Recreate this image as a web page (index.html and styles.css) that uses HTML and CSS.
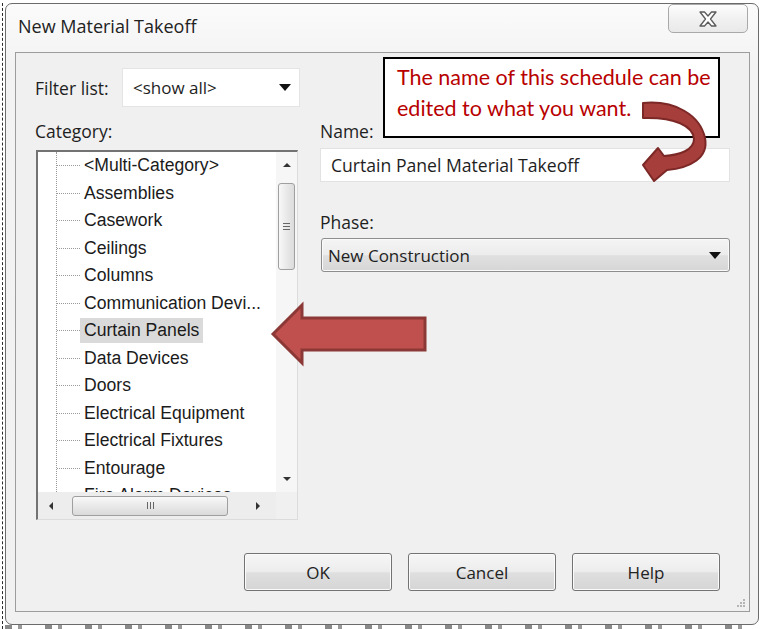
FILE: index.html
```html
<!DOCTYPE html>
<html lang="en">
<head>
    <meta charset="UTF-8">
    <title>New Material Takeoff</title>
    <link rel="stylesheet" href="styles.css">
</head>
<body>
    <div class="screen">
        <div class="desk">
            <div class="window">
                <div class="titlebar">
                    <div class="title">New Material Takeoff</div>
                    <button class="close-btn" aria-label="Close">
                        <svg width="20" height="16" viewBox="0 0 20 16">
                            <polygon points="2,1 6.5,1 10,5 13.5,1 18,1 12.5,8 18,15 13.5,15 10,11 6.5,15 2,15 7.5,8" fill="#fff" stroke="#5b5b5b" stroke-width="1.3" stroke-linejoin="round"/>
                        </svg>
                    </button>
                </div>

                <div class="client">
                    <div class="main">
                        <div class="left-col">
                            <div class="filter-row">
                                <span class="label filter-label">Filter list:</span>
                                <div class="combo filter-combo">
                                    <span>&lt;show all&gt;</span>
                                    <span class="caret"></span>
                                </div>
                            </div>

                            <div class="label category-label">Category:</div>

                            <div class="listbox">
                                <div class="list-view">
                                    <ul class="tree">
                                        <li><span>&lt;Multi-Category&gt;</span></li>
                                        <li><span>Assemblies</span></li>
                                        <li><span>Casework</span></li>
                                        <li><span>Ceilings</span></li>
                                        <li><span>Columns</span></li>
                                        <li><span>Communication Devi...</span></li>
                                        <li class="selected"><span>Curtain Panels</span></li>
                                        <li><span>Data Devices</span></li>
                                        <li><span>Doors</span></li>
                                        <li><span>Electrical Equipment</span></li>
                                        <li><span>Electrical Fixtures</span></li>
                                        <li><span>Entourage</span></li>
                                        <li><span>Fire Alarm Devices</span></li>
                                    </ul>
                                </div>
                                <div class="vscroll">
                                    <div class="sb-btn"><span class="tri tri-up"></span></div>
                                    <div class="thumb-v"><span class="grip-v"></span></div>
                                    <div class="sb-space"></div>
                                    <div class="sb-btn"><span class="tri tri-down"></span></div>
                                </div>
                                <div class="hscroll">
                                    <div class="sb-btn-h"><span class="tri tri-left"></span></div>
                                    <div class="thumb-h"><span class="grip-h"></span></div>
                                    <div class="sb-space"></div>
                                    <div class="sb-btn-h right"><span class="tri tri-right"></span></div>
                                </div>
                                <div class="sb-corner"></div>
                            </div>
                        </div>

                        <div class="right-col">
                            <div class="label">Name:</div>
                            <div class="textbox">Curtain Panel Material Takeoff</div>
                            <div class="label phase-label">Phase:</div>
                            <div class="combo phase-combo">
                                <span>New Construction</span>
                                <span class="caret"></span>
                            </div>
                        </div>
                    </div>

                    <div class="buttons">
                        <button class="btn">OK</button>
                        <button class="btn">Cancel</button>
                        <button class="btn">Help</button>
                    </div>

                    <svg class="size-grip" width="10" height="10" viewBox="0 0 10 10">
                        <rect x="7" y="1" width="2" height="2" fill="#b5b5b5"/>
                        <rect x="4" y="4" width="2" height="2" fill="#b5b5b5"/>
                        <rect x="7" y="4" width="2" height="2" fill="#b5b5b5"/>
                        <rect x="1" y="7" width="2" height="2" fill="#b5b5b5"/>
                        <rect x="4" y="7" width="2" height="2" fill="#b5b5b5"/>
                        <rect x="7" y="7" width="2" height="2" fill="#b5b5b5"/>
                    </svg>
                </div>
            </div>
            <div class="under-strip"></div>
        </div>

        <!-- Annotation layer -->
        <div class="callout">The name of this schedule can be<br>edited to what you want.</div>

        <svg class="arrows" width="761" height="629" viewBox="0 0 761 629">
            <polygon points="273,334 302,305 302,318 425,318 425,350 302,350 302,363" fill="#c0504d" stroke="#8c3836" stroke-width="3"/>
            <path d="M643,103 C675,100 700,115 705,138 C709,158 690,168 667,170 L654,181 L643,165 L658,148 L664,156 C680,155 694,150 694,139 C693,126 675,117 643,118 Z" fill="#a63e3b" stroke="#7c2826" stroke-width="2" stroke-linejoin="round"/>
        </svg>
    </div>
</body>
</html>
```

FILE: styles.css
```css
* {
    margin: 0;
    padding: 0;
    box-sizing: border-box;
}

body {
    background: #fff;
    font-family: 'Open Sans', 'Liberation Sans', sans-serif;
    color: #1e1e1e;
}

.screen {
    width: 761px;
    height: 629px;
    position: relative;
    overflow: hidden;
    padding: 3px 0 0 2px;
    background: #fff;
}

.desk {
    border-left: 1px dashed #2a2a2a;
    padding-left: 2px;
    height: 626px;
}

/* Window frame */
.window {
    width: 754px;
    height: 622px;
    border: 1px solid #6b6b6b;
    border-radius: 7px;
    background: linear-gradient(#fbfbfb, #f3f3f3 60px, #f1f1f1);
    display: flex;
    flex-direction: column;
}

.titlebar {
    height: 48px;
    display: flex;
    justify-content: space-between;
    align-items: flex-start;
}

.title {
    padding-left: 12px;
    line-height: 44px;
    font-size: 18px;
    color: #222;
}

.close-btn {
    width: 80px;
    height: 29px;
    margin-right: 10px;
    border: 1px solid #a9a9a9;
    border-radius: 5px;
    background: linear-gradient(#fdfdfd, #f1f1f1 50%, #e9e9e9);
    display: flex;
    align-items: center;
    justify-content: center;
}

.client {
    position: relative;
    height: 560px;
    margin-left: 9px;
    margin-right: 8px;
    border: 1px solid #9c9c9c;
    background: #f0f0f0;
    padding: 15px 0 0 19px;
}

.main {
    display: flex;
}

.label {
    font-size: 17.5px;
    line-height: 20px;
    color: #1e1e1e;
}

.left-col {
    width: 265px;
}

.filter-row {
    display: flex;
    align-items: center;
    height: 39px;
}

.filter-label {
    width: 87px;
}

.combo {
    display: flex;
    align-items: center;
    justify-content: space-between;
    font-size: 17px;
}

.filter-combo {
    width: 178px;
    height: 39px;
    background: #fff;
    border: 1px solid #e4e4e4;
    padding: 0 8px 0 10px;
}

.caret {
    width: 0;
    height: 0;
    border-left: 6px solid transparent;
    border-right: 6px solid transparent;
    border-top: 7px solid #111;
}

.category-label {
    margin-top: 14px;
    margin-bottom: 9px;
}

/* Category tree list */
.listbox {
    margin-left: 1px;
    width: 262px;
    height: 370px;
    border-top: 2px solid #737373;
    border-left: 2px solid #737373;
    border-right: 1px solid #dcdcdc;
    border-bottom: 1px solid #dcdcdc;
    display: grid;
    grid-template-columns: 238px 21px;
    grid-template-rows: 340px 27px;
    background: #fff;
}

.list-view {
    overflow: hidden;
    background: #fff;
}

.tree {
    list-style: none;
    margin-left: 18px;
    border-left: 1px dotted #9a9a9a;
    font-family: 'Liberation Sans', Arial, sans-serif;
    font-size: 17.6px;
    color: #1b1b1b;
}

.tree li {
    height: 27.5px;
    display: flex;
    align-items: center;
    white-space: nowrap;
}

.tree li::before {
    content: '';
    width: 23px;
    flex: none;
    border-top: 1px dotted #9a9a9a;
}

.tree li span {
    padding: 2px 4px;
}

.tree li.selected span {
    background: #dadada;
}

.vscroll {
    background: #f6f6f6;
    display: flex;
    flex-direction: column;
    align-items: center;
}

.sb-btn {
    height: 26px;
    width: 100%;
    display: flex;
    align-items: center;
    justify-content: center;
}

.sb-space {
    flex: 1;
}

.thumb-v {
    margin-top: 5px;
    width: 17px;
    height: 87px;
    border: 1px solid #9f9f9f;
    border-radius: 3px;
    background: linear-gradient(to right, #f8f8f8, #e9e9e9 50%, #dcdcdc);
    display: flex;
    align-items: center;
    justify-content: center;
}

.grip-v {
    width: 7px;
    height: 7px;
    border-top: 1px solid #666;
    border-bottom: 1px solid #666;
    background: linear-gradient(#666, #666) center / 7px 1px no-repeat;
}

.hscroll {
    background: #ededed;
    display: flex;
    align-items: center;
}

.sb-btn-h {
    width: 26px;
    height: 100%;
    display: flex;
    align-items: center;
    justify-content: center;
}

.sb-btn-h.right {
    width: 36px;
}

.thumb-h {
    margin-left: 8px;
    width: 156px;
    height: 20px;
    border: 1px solid #9f9f9f;
    border-radius: 3px;
    background: linear-gradient(#f8f8f8, #e9e9e9 50%, #dadada);
    display: flex;
    align-items: center;
    justify-content: center;
}

.grip-h {
    width: 7px;
    height: 7px;
    border-left: 1px solid #666;
    border-right: 1px solid #666;
    background: linear-gradient(#666, #666) center / 1px 7px no-repeat;
}

.sb-corner {
    background: #f0f0f0;
}

.tri {
    width: 0;
    height: 0;
}

.tri-up {
    border-left: 4px solid transparent;
    border-right: 4px solid transparent;
    border-bottom: 4px solid #333;
}

.tri-down {
    border-left: 4px solid transparent;
    border-right: 4px solid transparent;
    border-top: 4px solid #333;
}

.tri-left {
    border-top: 4px solid transparent;
    border-bottom: 4px solid transparent;
    border-right: 4px solid #333;
}

.tri-right {
    border-top: 4px solid transparent;
    border-bottom: 4px solid transparent;
    border-left: 4px solid #333;
}

/* Name / Phase */
.right-col {
    margin-left: 20px;
    width: 410px;
    padding-top: 53px;
}

.textbox {
    margin-top: 7px;
    height: 34px;
    background: #fff;
    border: 1px solid #e2e2e2;
    padding-left: 10px;
    font-size: 17.6px;
    line-height: 32px;
}

.phase-label {
    margin-top: 30px;
    margin-bottom: 6px;
}

.phase-combo {
    margin-left: 1px;
    width: 409px;
    height: 34px;
    border: 1px solid #8d8d8d;
    border-radius: 3px;
    padding: 0 8px 0 6px;
    background: linear-gradient(#f4f4f4, #ececec 50%, #e0e0e0 52%, #d6d6d6);
    box-shadow: inset 0 0 0 1px #fafafa;
}

/* Dialog buttons */
.buttons {
    margin-top: 33px;
    padding-right: 29px;
    display: flex;
    justify-content: flex-end;
    gap: 16px;
}

.btn {
    width: 148px;
    height: 38px;
    border: 1px solid #737373;
    border-radius: 3px;
    background: linear-gradient(#f6f6f6, #ececec 50%, #dfdfdf 52%, #d5d5d5);
    box-shadow: inset 0 0 0 1px #fbfbfb;
    font-family: 'Open Sans', sans-serif;
    font-size: 17px;
    color: #222;
}

.size-grip {
    position: absolute;
    right: 3px;
    bottom: 3px;
}

.under-strip {
    height: 4px;
    background: repeating-linear-gradient(90deg, #3a3a3a 0 7px, #fff 7px 13px, #555 13px 17px, #fff 17px 40px);
    opacity: 0.6;
}

/* Annotations */
.callout {
    position: absolute;
    left: 383px;
    top: 57px;
    width: 337px;
    height: 81px;
    border: 2px solid #000;
    background: #fff;
    padding: 3px 0 0 12px;
    font-family: Lato, 'Open Sans', sans-serif;
    font-size: 21.5px;
    line-height: 31px;
    color: #b80000;
    white-space: nowrap;
}

.arrows {
    position: absolute;
    top: 0;
    left: 0;
    pointer-events: none;
}
```
